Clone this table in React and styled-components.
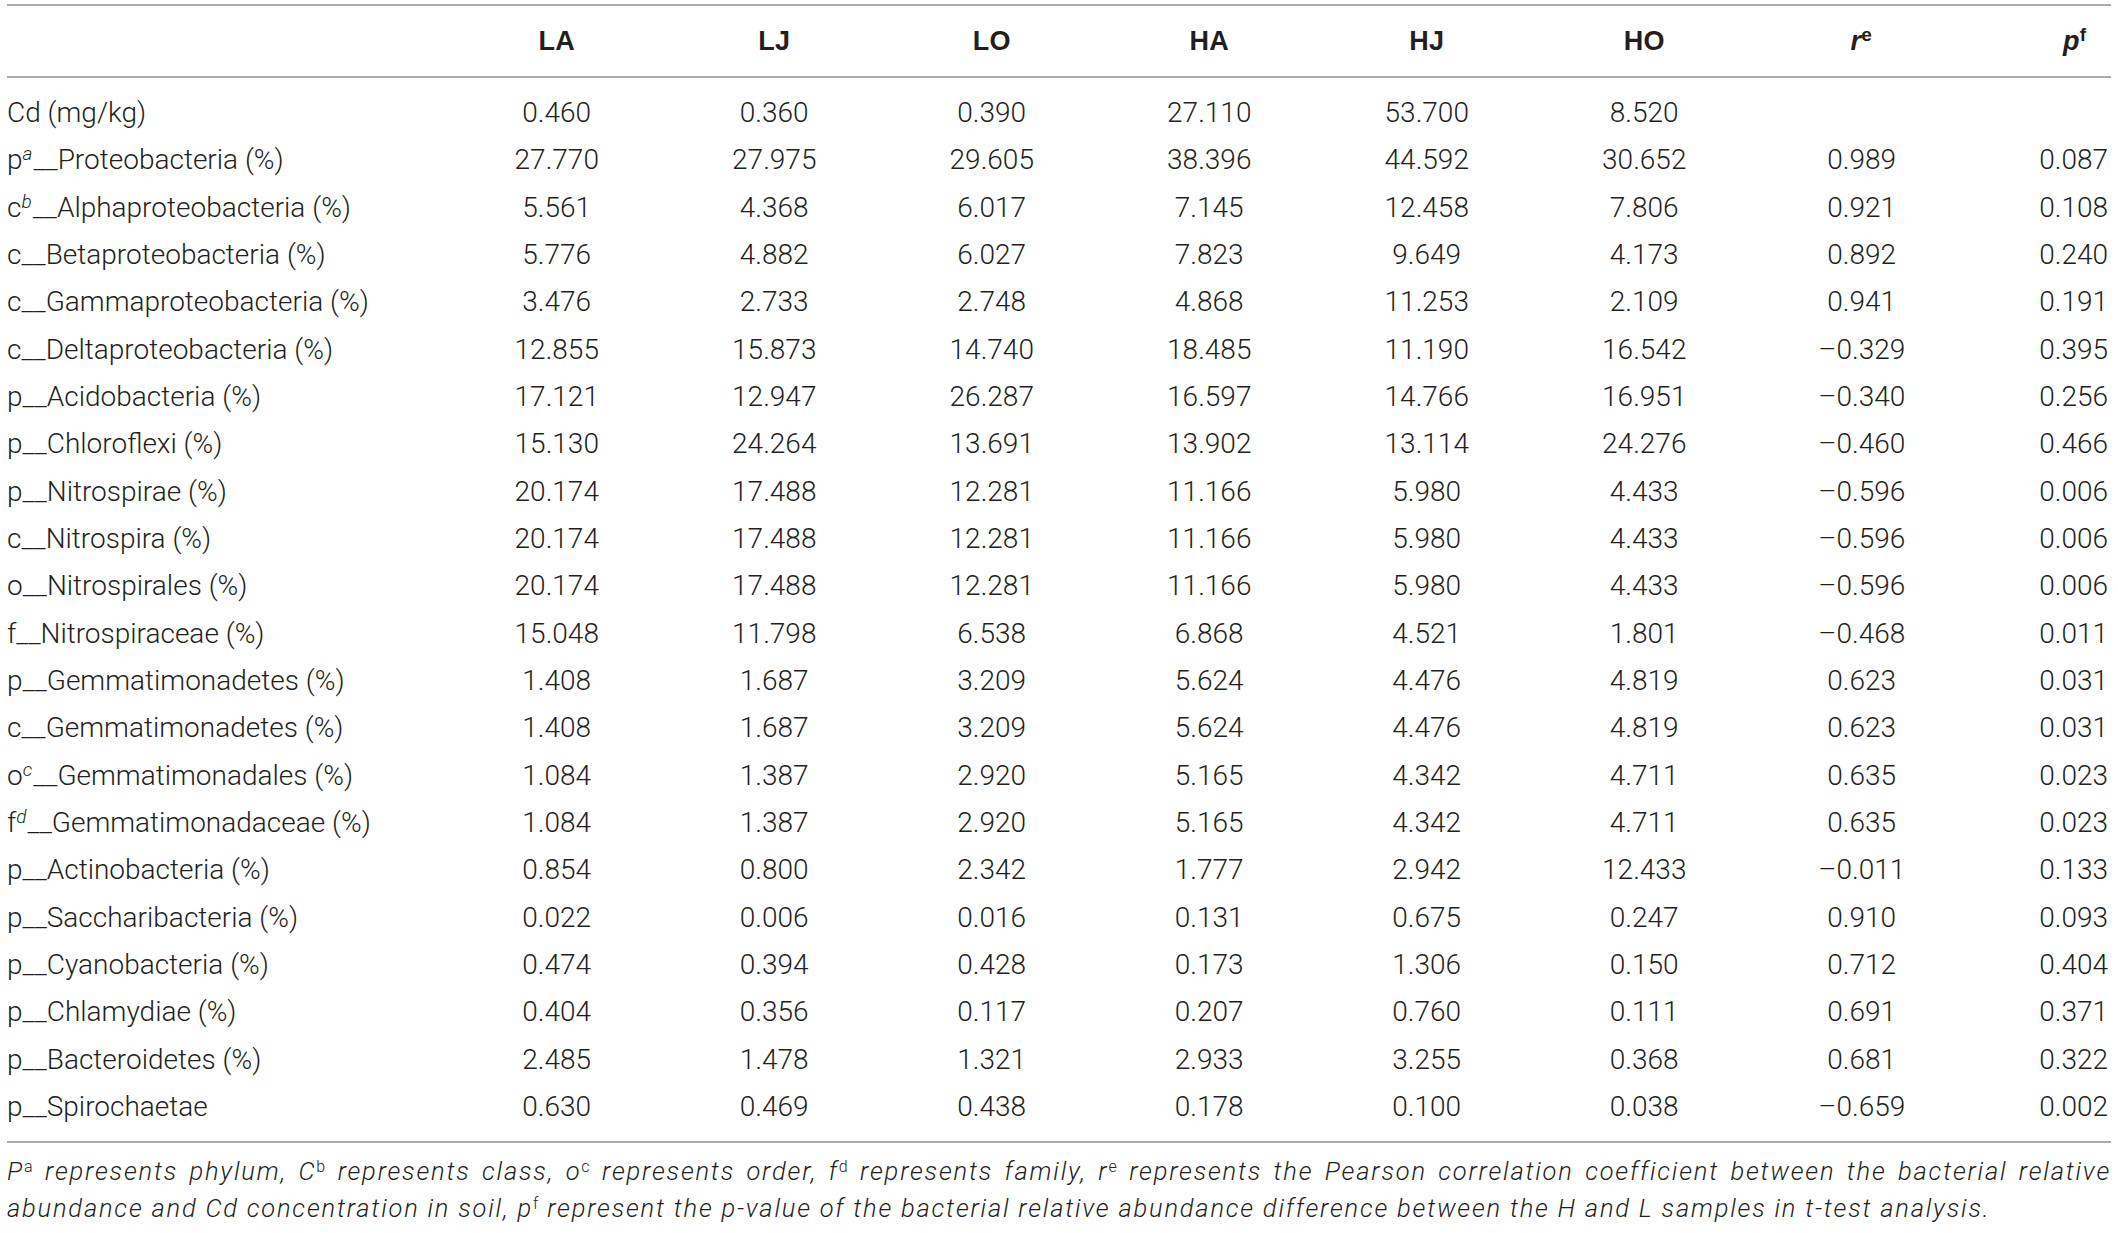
import React from "react"
import styled, { createGlobalStyle } from "styled-components"

const GlobalStyle = createGlobalStyle`
  html, body {
    margin: 0;
    padding: 0;
    background: #fff;
  }
  body {
    font-family: Roboto, "Liberation Sans", Arial, sans-serif;
    font-weight: 300;
    color: #231f20;
  }
`

const COLUMNS = "441px repeat(7, 217.5px) 1fr"

const Page = styled.div`
  padding: 4px 7px 0 7px;
`

const Table = styled.div`
  border-top: 2px solid #ababab;
  border-bottom: 2px solid #ababab;
`

const HeaderRow = styled.div`
  display: grid;
  grid-template-columns: ${COLUMNS};
  height: 70px;
  align-items: center;
  border-bottom: 2px solid #ababab;
`

const HeadCell = styled.div`
  font-family: "Liberation Sans", Arial, sans-serif;
  font-size: 27px;
  font-weight: 700;
  font-style: ${p => (p.$italic ? "italic" : "normal")};
  text-align: ${p => (p.$right ? "right" : "center")};
  padding-right: ${p => (p.$right ? "24px" : "0")};
  letter-spacing: 0.2px;
`

const Body = styled.div`
  padding: 11px 0;
`

const Row = styled.div`
  display: grid;
  grid-template-columns: ${COLUMNS};
  height: 47.33px;
  align-items: center;
  font-size: 28px;
  white-space: nowrap;
`

const Label = styled.div`
  text-align: left;
`

const Cell = styled.div`
  text-align: ${p => (p.$right ? "right" : "center")};
  padding-right: ${p => (p.$right ? "3px" : "0")};
`

const Sup = styled.sup`
  font-size: ${p => (p.$small ? "16px" : "19px")};
  font-style: ${p => (p.$italic ? "italic" : "normal")};
  font-weight: inherit;
  vertical-align: ${p => (p.$small ? "8px" : "9px")};
  line-height: 0;
  letter-spacing: 0;
  margin-right: 1px;
`

const Notes = styled.div`
  margin-top: 10px;
  font-size: 25.5px;
  font-style: italic;
  line-height: 37px;
  letter-spacing: 1.8px;
`

const NoteLine = styled.div`
  text-align: ${p => (p.$justify ? "justify" : "left")};
  text-align-last: ${p => (p.$justify ? "justify" : "left")};
  white-space: nowrap;
`

const nitro = ["20.174", "17.488", "12.281", "11.166", "5.980", "4.433", "–0.596", "0.006"]
const gemmaA = ["1.408", "1.687", "3.209", "5.624", "4.476", "4.819", "0.623", "0.031"]
const gemmaB = ["1.084", "1.387", "2.920", "5.165", "4.342", "4.711", "0.635", "0.023"]

const rows = [
  { rank: "Cd (mg/kg)", values: ["0.460", "0.360", "0.390", "27.110", "53.700", "8.520", "", ""] },
  { rank: "p", sup: "a", name: "Proteobacteria (%)", values: ["27.770", "27.975", "29.605", "38.396", "44.592", "30.652", "0.989", "0.087"] },
  { rank: "c", sup: "b", name: "Alphaproteobacteria (%)", values: ["5.561", "4.368", "6.017", "7.145", "12.458", "7.806", "0.921", "0.108"] },
  { rank: "c", name: "Betaproteobacteria (%)", values: ["5.776", "4.882", "6.027", "7.823", "9.649", "4.173", "0.892", "0.240"] },
  { rank: "c", name: "Gammaproteobacteria (%)", values: ["3.476", "2.733", "2.748", "4.868", "11.253", "2.109", "0.941", "0.191"] },
  { rank: "c", name: "Deltaproteobacteria (%)", values: ["12.855", "15.873", "14.740", "18.485", "11.190", "16.542", "–0.329", "0.395"] },
  { rank: "p", name: "Acidobacteria (%)", values: ["17.121", "12.947", "26.287", "16.597", "14.766", "16.951", "–0.340", "0.256"] },
  { rank: "p", name: "Chloroflexi (%)", values: ["15.130", "24.264", "13.691", "13.902", "13.114", "24.276", "–0.460", "0.466"] },
  { rank: "p", name: "Nitrospirae (%)", values: nitro },
  { rank: "c", name: "Nitrospira (%)", values: nitro },
  { rank: "o", name: "Nitrospirales (%)", values: nitro },
  { rank: "f", name: "Nitrospiraceae (%)", values: ["15.048", "11.798", "6.538", "6.868", "4.521", "1.801", "–0.468", "0.011"] },
  { rank: "p", name: "Gemmatimonadetes (%)", values: gemmaA },
  { rank: "c", name: "Gemmatimonadetes (%)", values: gemmaA },
  { rank: "o", sup: "c", name: "Gemmatimonadales (%)", values: gemmaB },
  { rank: "f", sup: "d", name: "Gemmatimonadaceae (%)", values: gemmaB },
  { rank: "p", name: "Actinobacteria (%)", values: ["0.854", "0.800", "2.342", "1.777", "2.942", "12.433", "–0.011", "0.133"] },
  { rank: "p", name: "Saccharibacteria (%)", values: ["0.022", "0.006", "0.016", "0.131", "0.675", "0.247", "0.910", "0.093"] },
  { rank: "p", name: "Cyanobacteria (%)", values: ["0.474", "0.394", "0.428", "0.173", "1.306", "0.150", "0.712", "0.404"] },
  { rank: "p", name: "Chlamydiae (%)", values: ["0.404", "0.356", "0.117", "0.207", "0.760", "0.111", "0.691", "0.371"] },
  { rank: "p", name: "Bacteroidetes (%)", values: ["2.485", "1.478", "1.321", "2.933", "3.255", "0.368", "0.681", "0.322"] },
  { rank: "p", name: "Spirochaetae", values: ["0.630", "0.469", "0.438", "0.178", "0.100", "0.038", "–0.659", "0.002"] },
]

const headers = ["LA", "LJ", "LO", "HA", "HJ", "HO"]

const RowLabel = ({ row }) => (
  <Label>
    {row.rank}
    {row.sup && <Sup $italic>{row.sup}</Sup>}
    {row.name && <>__{row.name}</>}
  </Label>
)

export default function App() {
  return (
    <Page>
      <GlobalStyle />
      <Table>
        <HeaderRow>
          <HeadCell />
          {headers.map(h => (
            <HeadCell key={h}>{h}</HeadCell>
          ))}
          <HeadCell $italic>
            r<Sup>e</Sup>
          </HeadCell>
          <HeadCell $italic $right>
            p<Sup>f</Sup>
          </HeadCell>
        </HeaderRow>
        <Body>
          {rows.map((row, i) => (
            <Row key={i}>
              <RowLabel row={row} />
              {row.values.map((v, j) => (
                <Cell key={j} $right={j === 7}>
                  {v}
                </Cell>
              ))}
            </Row>
          ))}
        </Body>
      </Table>
      <Notes>
        <NoteLine $justify>
          P<Sup $small>a</Sup> represents phylum, C<Sup $small>b</Sup> represents class, o
          <Sup $small>c</Sup> represents order, f<Sup $small>d</Sup> represents family, r
          <Sup $small>e</Sup> represents the Pearson correlation coefficient between the
          bacterial relative
        </NoteLine>
        <NoteLine>
          abundance and Cd concentration in soil, p<Sup $small>f</Sup> represent the p-value
          of the bacterial relative abundance difference between the H and L samples in
          t-test analysis.
        </NoteLine>
      </Notes>
    </Page>
  )
}
